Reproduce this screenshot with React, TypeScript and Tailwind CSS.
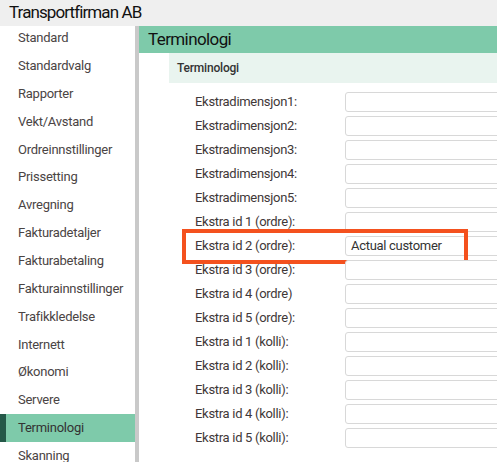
import React from "react";

const menu = [
  "Standard",
  "Standardvalg",
  "Rapporter",
  "Vekt/Avstand",
  "Ordreinnstillinger",
  "Prissetting",
  "Avregning",
  "Fakturadetaljer",
  "Fakturabetaling",
  "Fakturainnstillinger",
  "Trafikkledelse",
  "Internett",
  "Økonomi",
  "Servere",
  "Terminologi",
  "Skanning",
];

const fields = [
  "Ekstradimensjon1:",
  "Ekstradimensjon2:",
  "Ekstradimensjon3:",
  "Ekstradimensjon4:",
  "Ekstradimensjon5:",
  "Ekstra id 1 (ordre):",
  "Ekstra id 2 (ordre):",
  "Ekstra id 3 (ordre):",
  "Ekstra id 4 (ordre)",
  "Ekstra id 5 (ordre):",
  "Ekstra id 1 (kolli):",
  "Ekstra id 2 (kolli):",
  "Ekstra id 3 (kolli):",
  "Ekstra id 4 (kolli):",
  "Ekstra id 5 (kolli):",
];

export default function App() {
  return (
    <div
      className="w-[497px] h-[462px] overflow-hidden flex flex-col bg-white"
      style={{ fontFamily: "Roboto, 'Liberation Sans', sans-serif" }}
    >
      <div className="h-[26px] shrink-0 bg-[#efefef] pl-[9px] text-[17px] tracking-[-0.9px] leading-[25px] text-[#111]">
        Transportfirman AB
      </div>
      <div className="flex flex-1 min-h-0">
        <div className="w-[135px] shrink-0 flex flex-col -mt-[2px] overflow-hidden">
          {menu.map((m) => {
            const active = m === "Terminologi";
            return (
              <div
                key={m}
                className={
                  active
                    ? "h-[27.86px] shrink-0 flex items-center bg-[#7ecaaa] border-l-[6px] border-[#245848] pl-[12px] text-[13px] tracking-[-0.25px] text-[#333]"
                    : "h-[27.86px] shrink-0 flex items-center pl-[18px] text-[13px] tracking-[-0.25px] text-[#4a4444]"
                }
              >
                {m}
              </div>
            );
          })}
        </div>
        <div className="w-[4px] shrink-0 bg-[#c9c9c9]" />
        <div className="flex-1 min-w-0 flex flex-col">
          <div className="h-[27px] shrink-0 bg-[#7ecaaa] pl-[9px] text-[17px] tracking-[-0.6px] leading-[27px] text-[#111]">
            Terminologi
          </div>
          <div className="pl-[30px]">
            <div className="h-[30px] bg-[#e9f4ef] pl-[8px] flex items-center text-[12px] font-medium tracking-[-0.2px] text-[#333]">
              Terminologi
            </div>
            <div className="pt-[7px] pl-[26px] flex flex-col">
              {fields.map((f) => {
                const hl = f === "Ekstra id 2 (ordre):";
                return (
                  <div key={f} className="relative h-[24px] flex items-center shrink-0">
                    <div className="w-[150px] shrink-0 text-[13px] tracking-[-0.3px] text-[#3f3838]">{f}</div>
                    <div className="h-[20px] w-[200px] shrink-0 border border-[#d8d8d8] rounded-[3px] bg-white pl-[5px] text-[13px] tracking-[-0.3px] leading-[18px] text-[#333]">
                      {hl ? "Actual customer" : ""}
                    </div>
                    {hl && (
                      <div className="absolute left-[-13px] top-[-5px] w-[286px] h-[35px] border-[4px] border-[#f4511e]" />
                    )}
                  </div>
                );
              })}
            </div>
          </div>
        </div>
      </div>
    </div>
  );
}
